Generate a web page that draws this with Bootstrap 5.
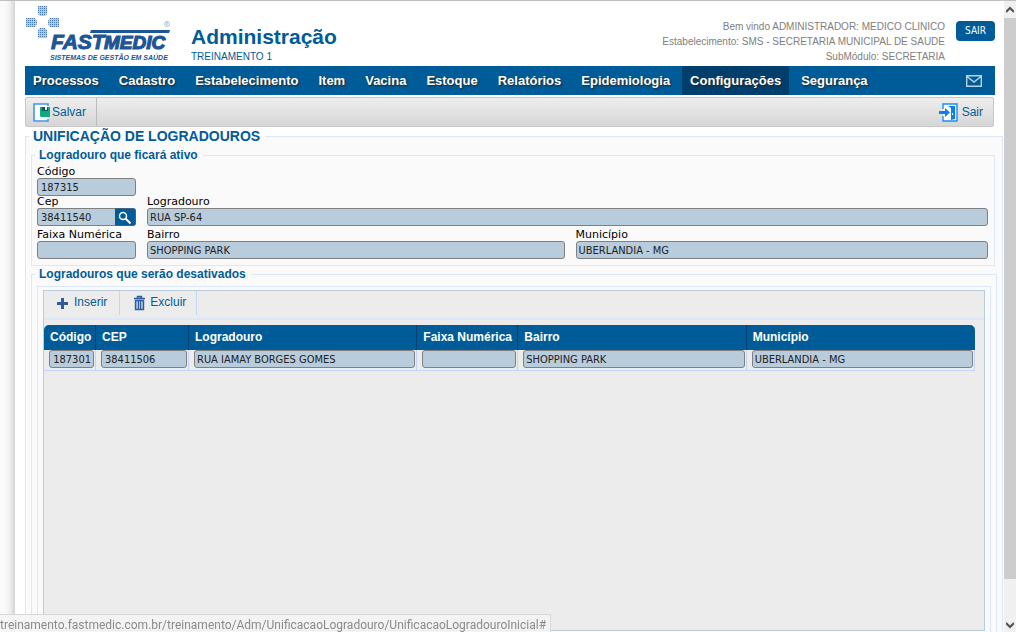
<!DOCTYPE html>
<html lang="pt-BR">
<head>
<meta charset="utf-8">
<meta name="viewport" content="width=device-width, initial-scale=1">
<title>Unificação de Logradouros</title>
<link href="https://cdn.jsdelivr.net/npm/bootstrap@5.3.0/dist/css/bootstrap.min.css" rel="stylesheet">
<style>
:root { --blue: #005c99; --line: #dde7f7; }
body { font-family: "Liberation Sans", Arial, sans-serif; font-size: 12px; line-height: 15px; color: #000; background: #fff; border-top: 1px solid #c0c0c0; }
a { color: var(--blue); text-decoration: none; }
.gutter { width: 15px; background: linear-gradient(90deg, #fafafa 30%, #f0f0f0 65%, #d4d4d4); }
.sheet { padding-left: 10px; min-width: 0; }
.inset { margin-right: 9px; }
.head { height: 65px; }
.module { padding-left: 6px; }
.module h1 { font-size: 21px; line-height: 24px; font-weight: bold; color: var(--blue); }
.module p { font-size: 10px; line-height: 15px; color: var(--blue); }
.welcome { font-size: 10px; line-height: 15px; color: #808080; margin-top: 18px; margin-right: 11px; }
.btn-exit { width: 39px; height: 20px; margin-top: 20px; padding: 0; font: 10px/20px "DejaVu Sans Condensed", "DejaVu Sans", sans-serif; color: #fff; background: var(--blue); border: 0; border-radius: 4px; }
.menu { background: var(--blue); height: 29px; padding-right: 13px; }
.menu .nav { gap: 4px; }
.menu .nav-link { padding: 0 8px; font-size: 13px; line-height: 29px; font-weight: bold; color: #fff; text-shadow: 1px 1px 2px #222; }
.menu .nav-link.active { background: #003f6c; }
.tools { height: 30px; margin: 2px 10px 0 0; background: linear-gradient(#eee, #d6d6d6); border: 1px solid #c8c8c8; border-radius: 2px; font-size: 12px; }
.tools a:first-child { border-right: 1px solid #bbb; }
.tools a { gap: 2px; padding: 0 10px 0 7px; }
.tools a:last-child { gap: 4px; }
fieldset { border: 1px solid var(--line) !important; }
fieldset > legend { float: none; width: auto; margin: 0 0 0 -2px; padding: 0 5px 0 4px; font-size: 12px; line-height: 16px; font-weight: bold; color: var(--blue); }
.outer { background: #fafafa; margin-right: 1px; padding: 0 5px; }
.outer > legend { font-size: 14px; line-height: 18px; }
.active-box { margin-right: 2px; padding: 0 6px 6px 5px; margin-top: 2px; }
.off-box { padding: 4px 5px 8px; }
.frame { padding: 3px 5px 8px; }
.fields { display: grid; grid-template-columns: 99px 417fr 412fr; column-gap: 11px; padding-top: 3px; }
.fields label { display: block; font: 11px/12px "DejaVu Sans", Verdana, sans-serif; }
.f-code { grid-column: 1 / -1; }
.f-code .value { width: 99px; }
.f-wide { grid-column: 2 / -1; }
.f-last { padding-top: 3px; }
.value { display: block; width: 100%; height: 18px; padding: 0 2px; font: 11px/16px "DejaVu Sans Condensed", Tahoma, sans-serif; color: #222; background: #b8ccdc; border: 1px solid #808080; border-radius: 3px; }
.value.code { padding-left: 3px; }
.finder .value { border-radius: 3px 0 0 3px; border-right: 0; min-width: 0; flex: 1 1 0; }
.finder button { width: 21px; height: 18px; padding: 0; background: var(--blue); border: 1px solid #46637a; border-left: 0; border-radius: 0 3px 3px 0; }
.finder button svg { display: block; margin: 1px 0 0 3px; }
.panel { min-height: 341px; background: #ececec; border: 1px solid #b8ccdc; }
.actions { height: 29px; border-bottom: 2px solid var(--line); font-size: 12px; line-height: 22px; }
.actions a { height: 24px; border-right: 1px solid #c3d5fb; padding: 0 10px 0 12px; }
.actions .add { padding-right: 12px; }
.actions .remove { padding-left: 14px; }
.grid-rows { table-layout: fixed; width: calc(100% - 9px); margin: 5px 0 0; border-collapse: separate; border-spacing: 0; }
.grid-rows th { height: 25px; padding: 0 6px; background: var(--blue); color: #fff; font-size: 12px; line-height: 25px; white-space: nowrap; border-right: 1px solid #00406e; }
.grid-rows th:first-child { border-top-left-radius: 5px; }
.grid-rows th:last-child { border-top-right-radius: 5px; border-right: 0; }
.grid-rows td { padding: 0 1px 2px 5px; border-right: 1px solid #c3d5fb; border-bottom: 1px solid #c3d5fb; }
.c-code { width: 52px; } .c-zip { width: 93px; } .c-range { width: 101px; }
.scroller { width: 12px; background: #f0f0f0; padding: 0 0 2px; }
.thumb { margin-top: 3px; background: #cdcdcd; }
.status { left: 0; bottom: 0; height: 18px; padding: 3px 4px 0 0; font: 12px/15px Roboto, "Segoe UI", sans-serif; color: #8a8a8a; background: rgba(244,244,244,.85); border: 1px solid #d8d8d8; border-width: 1px 1px 0 0; white-space: nowrap; }
</style>
</head>
<body class="d-flex vh-100 overflow-hidden">
<div class="gutter flex-shrink-0"></div>
<main class="sheet flex-grow-1">
  <header class="head inset d-flex">
    <svg width="160" height="65" viewBox="25 1 160 65" role="img" aria-label="Fastmedic">
      <defs><pattern id="dots" width="2" height="2" patternUnits="userSpaceOnUse"><rect width="2" height="2" fill="#b5c9e0"/><rect width="1" height="1" fill="#4a79ae"/></pattern></defs>
      <path fill="url(#dots)" d="M38 6h9v8l-2 2h-5l-2-2zM26 18h9l2 3v3l-2 3h-9zM59 18h-9l-2 3v3l2 3h9zM38 38h9v-8l-2-2h-5l-2 2z"/>
      <g fill="#1d5595" stroke="#1d5595" font-family="Liberation Sans, Arial, sans-serif" font-weight="bold" font-style="italic">
        <text x="51" y="49" font-size="21" stroke-width="1">FAST</text>
        <text x="104" y="49" font-size="19" stroke-width="1.2">MEDIC</text>
        <path stroke="none" d="M91 30h79l-1 3H90z"/>
        <text x="50" y="60" font-size="7" stroke="none">SISTEMAS DE GESTÃO EM SAÚDE</text>
      </g>
      <circle cx="167" cy="24" r="2.5" fill="none" stroke="#8da9c8" stroke-width=".7"/><path d="M166.3 25.5v-3h1.2v1.5h-1l1.3 1.5" fill="none" stroke="#8da9c8" stroke-width=".5"/>
    </svg>
    <div class="module mt-4">
      <h1 class="m-0">Administração</h1>
      <p class="m-0">TREINAMENTO 1</p>
    </div>
    <div class="welcome ms-auto text-end">Bem vindo ADMINISTRADOR: MEDICO CLINICO<br>Estabelecimento: SMS - SECRETARIA MUNICIPAL DE SAUDE<br>SubMódulo: SECRETARIA</div>
    <button type="button" class="btn-exit">SAIR</button>
  </header>
  <nav class="menu inset d-flex align-items-center justify-content-between">
    <ul class="nav flex-nowrap">
      <li><a class="nav-link" href="#">Processos</a></li>
      <li><a class="nav-link" href="#">Cadastro</a></li>
      <li><a class="nav-link" href="#">Estabelecimento</a></li>
      <li><a class="nav-link" href="#">Item</a></li>
      <li><a class="nav-link" href="#">Vacina</a></li>
      <li><a class="nav-link" href="#">Estoque</a></li>
      <li><a class="nav-link" href="#">Relatórios</a></li>
      <li><a class="nav-link" href="#">Epidemiologia</a></li>
      <li><a class="nav-link active" href="#">Configurações</a></li>
      <li><a class="nav-link" href="#">Segurança</a></li>
    </ul>
    <a href="#" aria-label="Mensagens" class="d-flex"><svg width="16" height="12" viewBox="0 0 16 12" fill="none" stroke="#b9d3e6" stroke-width="1.4"><path d="M.7.7h14.6v10.6H.7zM1 1.5l7 5.5 7-5.5"/></svg></a>
  </nav>
  <div class="tools d-flex justify-content-between">
    <a href="#" class="d-flex align-items-center"><svg width="17" height="20" viewBox="0 0 17 20"><path d="M15 4V2H1v17h14v-2" fill="#fff" stroke="#3d97f5" stroke-width="1.6"/><path d="M7 5h10v10H8l-1-1z" fill="#0fa982"/><path d="M9 5h6v4H9z" fill="#075f58"/><path d="M12 5h2v3h-2z" fill="#dff"/></svg>Salvar</a>
    <a href="#" class="d-flex align-items-center"><svg width="19" height="20" viewBox="0 0 19 20"><path d="M4 7V2h14v17H4v-5" fill="#fff" stroke="#1b8cf5" stroke-width="1.400"/><path d="M9 4h7v13l-4 1V6z" fill="#0a7ff0"/><path d="M0 9h6V6l5 4.500L6 15v-3H0z" fill="#0a7ff0"/><path d="M13 11h1v2h-1z" fill="#fff"/></svg>Sair</a>
  </div>
  <fieldset class="outer">
    <legend>UNIFICAÇÃO DE LOGRADOUROS</legend>
    <fieldset class="active-box">
      <legend>Logradouro que ficará ativo</legend>
      <div class="fields">
        <div class="f-code"><label for="cod">Código</label><input class="value code" id="cod" value="187315" readonly></div>
        <div><label for="cep">Cep</label><div class="finder d-flex"><input class="value code" id="cep" value="38411540" readonly><button type="button" aria-label="Buscar CEP"><svg width="14" height="14" viewBox="0 0 14 14" fill="none" stroke="#fff"><circle cx="5" cy="5" r="3.500" stroke-width="1.500"/><path d="M7.500 7.500l5 5" stroke-width="2"/></svg></button></div></div>
        <div class="f-wide"><label for="log">Logradouro</label><input class="value" id="log" value="RUA SP-64" readonly></div>
        <div class="f-last"><label for="faixa" class="text-nowrap">Faixa Numérica</label><input class="value" id="faixa" readonly></div>
        <div class="f-last"><label for="bairro">Bairro</label><input class="value" id="bairro" value="SHOPPING PARK" readonly></div>
        <div class="f-last"><label for="mun">Município</label><input class="value" id="mun" value="UBERLANDIA - MG" readonly></div>
      </div>
    </fieldset>
    <fieldset class="off-box">
      <legend>Logradouros que serão desativados</legend>
      <fieldset class="frame">
        <div class="panel">
          <div class="actions d-flex">
            <a href="#" class="add d-flex"><svg class="mt-1 me-1" width="14" height="17" viewBox="0 0 14 17"><path d="M5 3h3v4h4v3H8v4H5v-4H1V7h4z" fill="#2f5c9c"/></svg><span>Inserir</span></a>
            <a href="#" class="remove d-flex"><svg class="mt-1 me-1" width="12" height="16" viewBox="0 0 12 16"><path d="M0 3.500h11M3.500 3V1.500h4V3M1.500 5.500h8v9h-8z" fill="#a9bcd8" stroke="#2f5c9c" stroke-width="1.400"/><path d="M4.500 6v8M6.500 6v8" stroke="#2f5c9c"/></svg><span>Excluir</span></a>
          </div>
          <table class="grid-rows">
            <colgroup><col class="c-code"><col class="c-zip"><col><col class="c-range"><col><col></colgroup>
            <thead><tr><th scope="col">Código</th><th scope="col">CEP</th><th scope="col">Logradouro</th><th scope="col">Faixa Numérica</th><th scope="col">Bairro</th><th scope="col">Município</th></tr></thead>
            <tbody><tr>
              <td><input class="value text-end" aria-label="Código" value="187301" readonly></td>
              <td><input class="value code" aria-label="CEP" value="38411506" readonly></td>
              <td><input class="value" aria-label="Logradouro" value="RUA IAMAY BORGES GOMES" readonly></td>
              <td><input class="value" aria-label="Faixa Numérica" readonly></td>
              <td><input class="value" aria-label="Bairro" value="SHOPPING PARK" readonly></td>
              <td><input class="value" aria-label="Município" value="UBERLANDIA - MG" readonly></td>
            </tr></tbody>
          </table>
        </div>
      </fieldset>
    </fieldset>
  </fieldset>
</main>
<div class="scroller flex-shrink-0 d-flex flex-column align-items-center">
  <svg width="8" height="14" viewBox="0 0 8 14"><path d="M0 11l4-4 4 4" fill="none" stroke="#505050" stroke-width="2"/></svg>
  <div class="thumb w-100 flex-grow-1"></div>
  <svg class="mt-auto" width="8" height="51" viewBox="0 0 8 51"><path d="M0 44l4 4 4-4" fill="none" stroke="#505050" stroke-width="2"/></svg>
</div>
<div class="status position-fixed">treinamento.fastmedic.com.br/treinamento/Adm/UnificacaoLogradouro/UnificacaoLogradouroInicial#</div>
<script src="https://cdn.jsdelivr.net/npm/bootstrap@5.3.0/dist/js/bootstrap.bundle.min.js"></script>
</body>
</html>
